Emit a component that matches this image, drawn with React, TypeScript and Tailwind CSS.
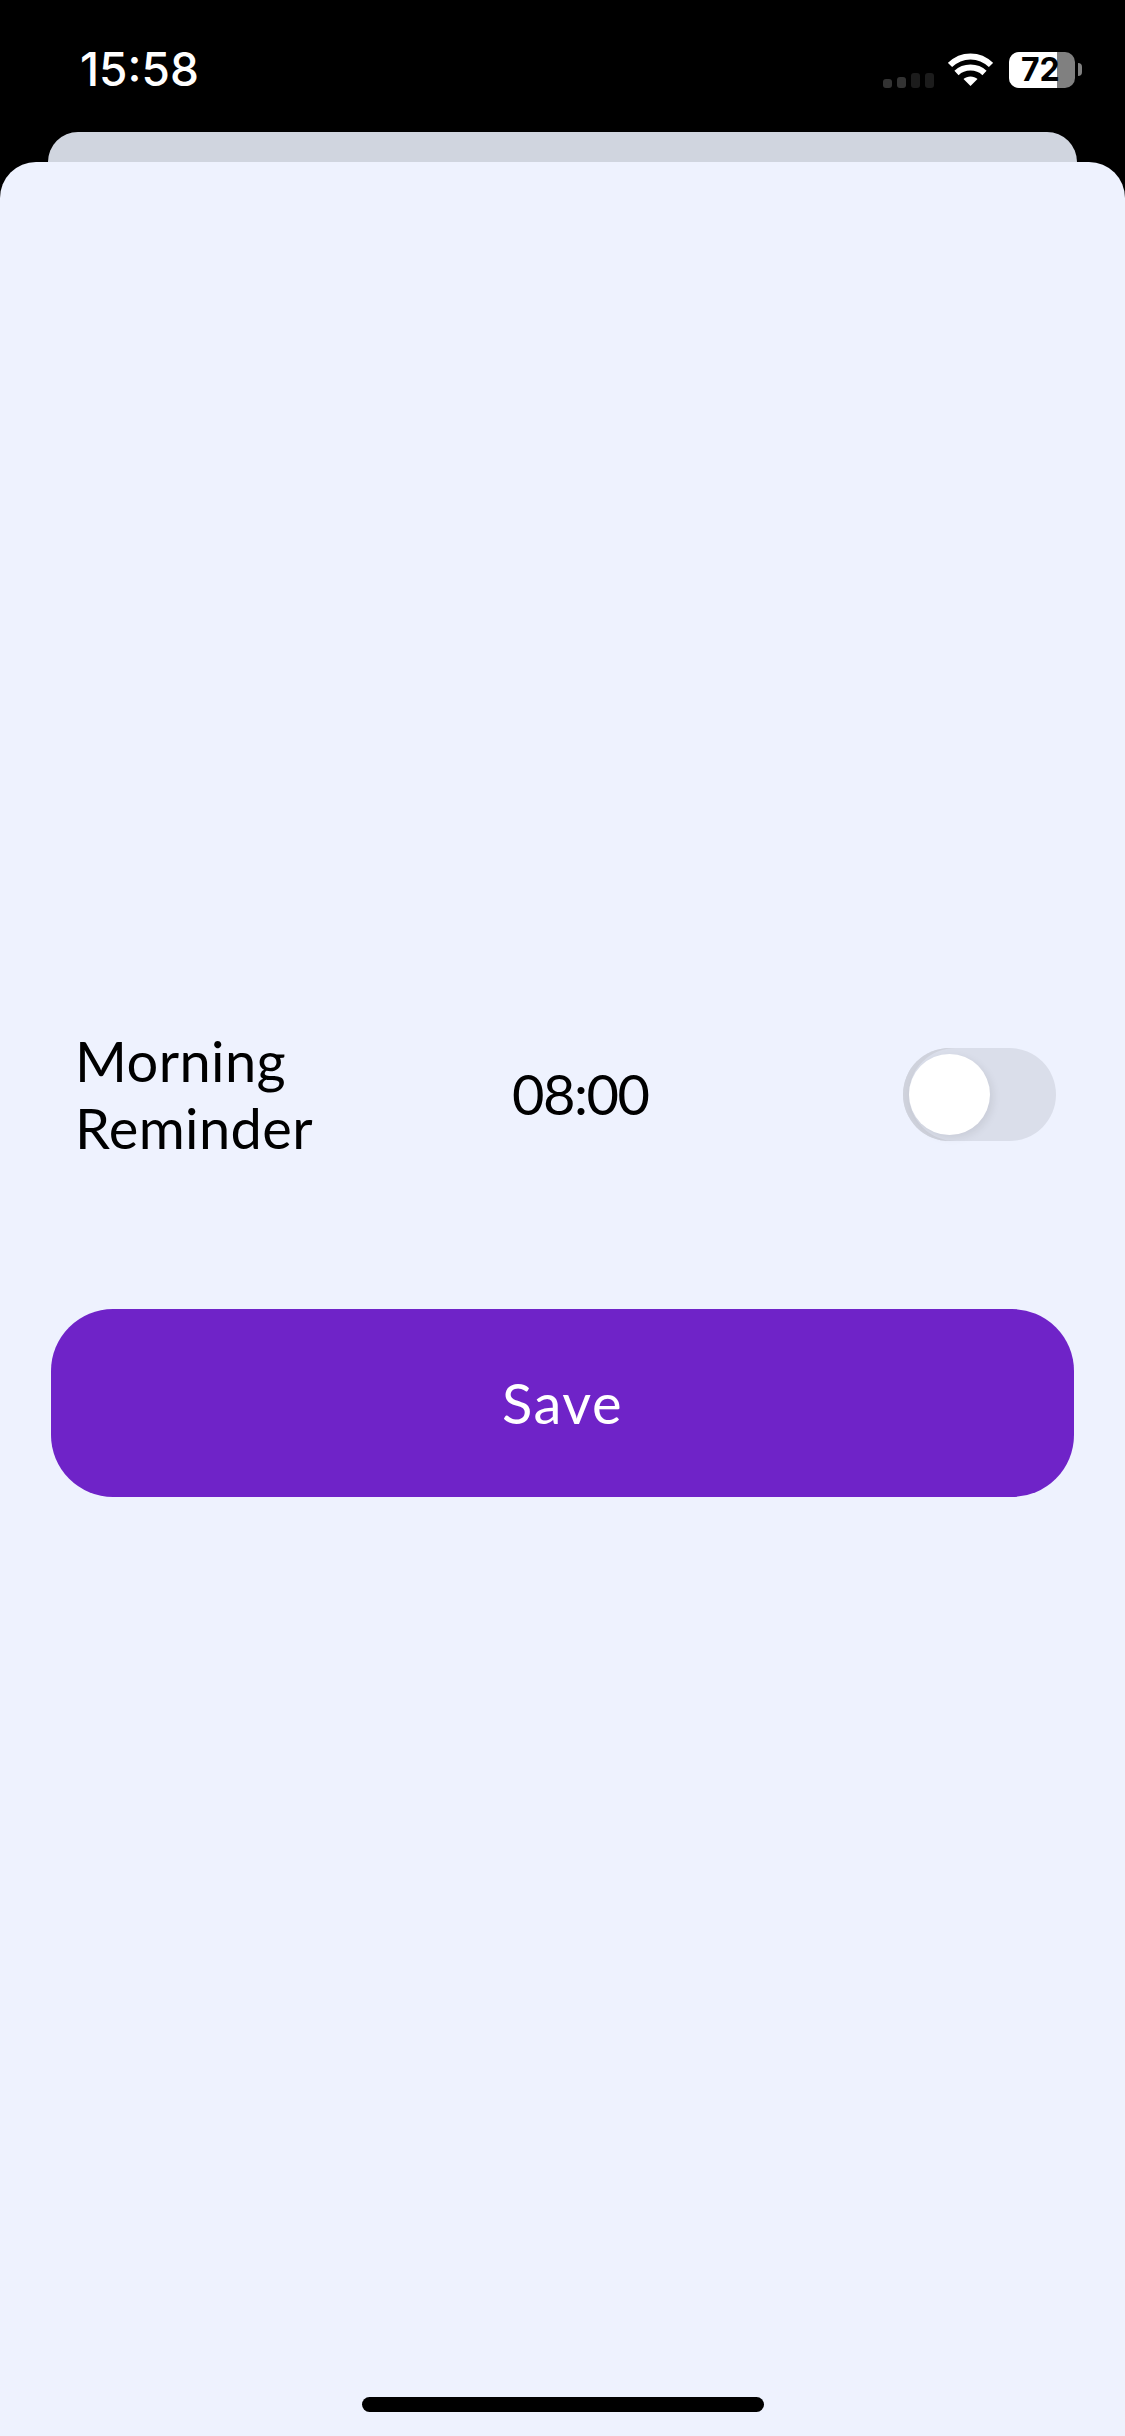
const StatusIcons = () => (
  <div className="flex items-center">
    <div className="mr-[14px] mt-[22px] flex items-end gap-[5px]">
      <div className="h-[9px] w-[9px] rounded-[3px] bg-[#333333]" />
      <div className="h-[11px] w-[9px] rounded-[3px] bg-[#333333]" />
      <div className="h-[15px] w-[9px] rounded-[3px] bg-[#1c1c1c]" />
      <div className="h-[15px] w-[9px] rounded-[3px] bg-[#1c1c1c]" />
    </div>
    <svg width="45" height="33" viewBox="0 0 45 33" className="mr-[16px]" aria-hidden="true">
      <path d="M2 12C13.5 0.5 31.5 0.5 43 12" fill="none" stroke="#fff" strokeWidth="6" />
      <path d="M8.5 20C16 12.7 29 12.7 36.5 20" fill="none" stroke="#fff" strokeWidth="6" />
      <path d="M22.5 33L15.5 26C19 22.5 26 22.5 29.5 26Z" fill="#fff" />
    </svg>
    <div className="relative flex h-[36px] w-[66px] rounded-[10px] bg-[#808080]">
      <div className="h-full w-[48px] rounded-l-[10px] bg-white" />
      <span className="absolute top-0 left-[12px] font-['Inter',sans-serif] text-[32px] leading-[36px] font-bold text-black">
        72
      </span>
    </div>
    <div className="ml-[3px] h-[13px] w-[4px] rounded-r-full bg-[#808080]" />
  </div>
);

const App = () => {
  return (
    <div className="flex h-[2436px] w-[1125px] flex-col overflow-hidden bg-black font-['Lato',sans-serif]">
      <header className="flex h-[132px] items-start justify-between pt-[51px] pr-[43px] pl-[80px]">
        <span className="font-['Inter',sans-serif] text-[46px] leading-[36px] font-medium text-white">15:58</span>
        <StatusIcons />
      </header>

      <div className="mx-[48px] h-[30px] rounded-t-[36px] bg-[#d0d5df]" />

      <main className="flex flex-1 flex-col rounded-t-[36px] bg-[#eef2fe] pt-[865px]">
        <div className="flex items-center pr-[69px] pl-[75px]">
          <p className="w-[437px] text-[56px] leading-[67px] tracking-[0.4px] text-black">
            Morning
            <br />
            Reminder
          </p>
          <span className="-mt-[2px] text-[56px] leading-[67px] tracking-[-1.5px] text-black">08:00</span>
          <div className="ml-auto flex h-[93px] w-[153px] items-center rounded-full bg-[#dadeea] pl-[6px] shadow-[inset_6px_0_0_#cfd2dc]">
            <div className="h-[81px] w-[81px] rounded-full bg-white shadow-[3px_3px_8px_rgba(0,0,0,0.08)]" />
          </div>
        </div>

        <button
          type="button"
          className="mx-[51px] mt-[148px] h-[188px] rounded-[62px] bg-[#6f23c8] text-[56px] tracking-[1.5px] text-white"
        >
          Save
        </button>

        <div className="mx-auto mt-auto mb-[24px] h-[15px] w-[402px] rounded-full bg-black" />
      </main>
    </div>
  );
};

export default App;
